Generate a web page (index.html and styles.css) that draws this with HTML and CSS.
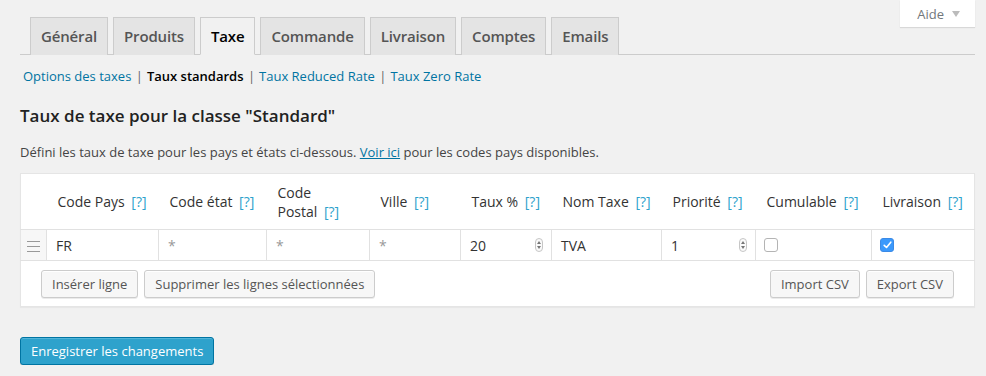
FILE: index.html
```html
<!DOCTYPE html>
<html lang="fr">

<head>
    <meta charset="UTF-8">
    <title>Taxe</title>
    <link rel="stylesheet" href="styles.css">
</head>

<body>
    <div class="wrap">
        <div class="help-bar">
            <a href="#" class="help-link">Aide <span class="arrow"></span></a>
        </div>

        <nav class="nav-tabs">
            <a href="#" class="nav-tab">Général</a>
            <a href="#" class="nav-tab">Produits</a>
            <a href="#" class="nav-tab active">Taxe</a>
            <a href="#" class="nav-tab">Commande</a>
            <a href="#" class="nav-tab">Livraison</a>
            <a href="#" class="nav-tab">Comptes</a>
            <a href="#" class="nav-tab">Emails</a>
        </nav>

        <ul class="subsub">
            <li><a href="#">Options des taxes</a> |</li>
            <li><a href="#" class="current">Taux standards</a> |</li>
            <li><a href="#">Taux Reduced Rate</a> |</li>
            <li><a href="#">Taux Zero Rate</a></li>
        </ul>

        <h3 class="section-title">Taux de taxe pour la classe "Standard"</h3>
        <p class="intro">Défini les taux de taxe pour les pays et états ci-dessous. <a href="#">Voir ici</a> pour les codes pays disponibles.</p>

        <table class="rates">
            <colgroup>
                <col class="c-sort">
                <col class="c-112">
                <col class="c-108">
                <col class="c-103">
                <col class="c-91">
                <col class="c-91">
                <col class="c-110">
                <col class="c-94">
                <col class="c-116">
                <col>
            </colgroup>
            <thead>
                <tr>
                    <th></th>
                    <th>Code Pays <span class="tip">[?]</span></th>
                    <th>Code état <span class="tip">[?]</span></th>
                    <th>Code<br>Postal <span class="tip">[?]</span></th>
                    <th>Ville <span class="tip">[?]</span></th>
                    <th>Taux % <span class="tip">[?]</span></th>
                    <th>Nom Taxe <span class="tip">[?]</span></th>
                    <th>Priorité <span class="tip">[?]</span></th>
                    <th>Cumulable <span class="tip">[?]</span></th>
                    <th>Livraison <span class="tip">[?]</span></th>
                </tr>
            </thead>
            <tbody>
                <tr>
                    <td class="sort"><span class="handle"></span></td>
                    <td><div class="field">FR</div></td>
                    <td><div class="field empty">*</div></td>
                    <td><div class="field empty">*</div></td>
                    <td><div class="field empty">*</div></td>
                    <td><div class="field number">20 <span class="spin"></span></div></td>
                    <td><div class="field">TVA</div></td>
                    <td><div class="field number">1 <span class="spin"></span></div></td>
                    <td><div class="field check-cell"><span class="check"></span></div></td>
                    <td><div class="field check-cell"><span class="check on">
                        <svg width="9" height="8" viewBox="0 0 9 8"><path d="M1.2 4.3 L3.5 6.5 L7.8 1.2" fill="none" stroke="#fff" stroke-width="1.6" stroke-linecap="round" stroke-linejoin="round"/></svg>
                    </span></div></td>
                </tr>
            </tbody>
            <tfoot>
                <tr>
                    <th colspan="10">
                        <div class="actions">
                            <a href="#" class="button">Insérer ligne</a>
                            <a href="#" class="button">Supprimer les lignes sélectionnées</a>
                            <span class="spacer"></span>
                            <a href="#" class="button">Import CSV</a>
                            <a href="#" class="button">Export CSV</a>
                        </div>
                    </th>
                </tr>
            </tfoot>
        </table>

        <p class="submit"><a href="#" class="button-primary">Enregistrer les changements</a></p>
    </div>
</body>

</html>
```

FILE: styles.css
```css
html,
body {
    margin: 0;
    padding: 0;
}

body {
    background: #f1f1f1;
    font-family: 'Open Sans', sans-serif;
    font-size: 13px;
    color: #444;
}

a {
    text-decoration: none;
}

.wrap {
    position: relative;
    margin: 0 11px 0 20px;
}

/*-----aide-----*/
.help-bar {
    position: absolute;
    top: 0;
    right: 0;
}

.help-link {
    display: flex;
    align-items: center;
    gap: 8px;
    height: 27px;
    padding: 0 15px 0 17px;
    background: #fff;
    color: #72777c;
    box-shadow: 0 1px 1px rgba(0, 0, 0, .1);
}

.help-link .arrow {
    width: 0;
    height: 0;
    border-left: 4px solid transparent;
    border-right: 4px solid transparent;
    border-top: 6px solid #bbb;
}

/*-----onglets-----*/
.nav-tabs {
    display: flex;
    gap: 5px;
    padding: 17px 0 0 10px;
    border-bottom: 1px solid #ccc;
}

.nav-tab {
    display: block;
    padding: 6px 10px;
    margin-bottom: -1px;
    line-height: 24px;
    font-size: 15px;
    font-weight: 600;
    letter-spacing: -0.15px;
    color: #555;
    background: #e4e4e4;
    border: 1px solid #ccc;
    border-bottom: none;
}

.nav-tab.active {
    color: #000;
    background: #f1f1f1;
    border-bottom: 1px solid #f1f1f1;
    padding-bottom: 6px;
}

/*-----sous menu-----*/
.subsub {
    display: flex;
    margin: 12px 0 0 3px;
    padding: 0;
    list-style: none;
    color: #666;
    line-height: 18px;
}

.subsub li {
    margin-right: 4px;
}

.subsub a {
    color: #0074a2;
    margin-right: 1px;
}

.subsub a.current {
    color: #000;
    font-weight: 600;
}

.section-title {
    margin: 19px 0 0;
    font-size: 17px;
    font-weight: 600;
    color: #222;
    line-height: 24px;
}

.intro {
    margin: 15px 0 0;
    line-height: 18px;
    color: #444;
}

.intro a {
    color: #0074a2;
    text-decoration: underline;
}

/*-----tableau-----*/
.rates {
    width: 955px;
    margin-top: 12px;
    table-layout: fixed;
    border-collapse: collapse;
    background: #fff;
    border: 1px solid #e5e5e5;
    box-shadow: 0 1px 1px rgba(0, 0, 0, .04);
}

.c-sort { width: 26px; }
.c-112 { width: 112px; }
.c-108 { width: 108px; }
.c-103 { width: 103px; }
.c-91 { width: 91px; }
.c-110 { width: 110px; }
.c-94 { width: 94px; }
.c-116 { width: 116px; }

.rates thead th {
    height: 55px;
    padding: 0 8px 0 11px;
    text-align: left;
    font-weight: 400;
    font-size: 14px;
    line-height: 19px;
    color: #333;
    border-bottom: 1px solid #e1e1e1;
}

.tip {
    margin-left: 3px;
    color: #2ea2cc;
    font-size: 14px;
}

.rates tbody td {
    height: 30px;
    padding: 0;
    border-right: 1px solid #e1e1e1;
    border-bottom: 1px solid #e1e1e1;
}

.rates tbody td:last-child {
    border-right: none;
}

.sort {
    background: #f7f7f7;
    text-align: center;
}

.handle {
    display: inline-block;
    width: 13px;
    height: 9px;
    border-top: 1px solid #999;
    border-bottom: 1px solid #999;
    position: relative;
    vertical-align: middle;
}

.handle::after {
    content: "";
    position: absolute;
    left: 0;
    right: 0;
    top: 4px;
    border-top: 1px solid #999;
}

.field {
    display: flex;
    align-items: center;
    height: 30px;
    padding: 0 9px;
    font-size: 14px;
    color: #333;
}

.field.empty {
    color: #999;
}

.field.number {
    justify-content: space-between;
    padding-right: 8px;
}

.spin {
    width: 6px;
    height: 12px;
    border: 1px solid #c6c6c6;
    border-radius: 4px;
    position: relative;
    background: #fafafa;
}

.spin::before,
.spin::after {
    content: "";
    position: absolute;
    left: 1px;
    border-left: 2px solid transparent;
    border-right: 2px solid transparent;
}

.spin::before {
    top: 2px;
    border-bottom: 3px solid #777;
}

.spin::after {
    bottom: 2px;
    border-top: 3px solid #777;
}

.check {
    display: flex;
    align-items: center;
    justify-content: center;
    width: 12px;
    height: 12px;
    border: 1px solid #b4b4b4;
    border-radius: 3px;
    background: #fff;
    margin-left: -1px;
}

.check.on {
    background: #3b99fc;
    border-color: #3b8ae6;
}

.rates tfoot th {
    padding: 9px 20px 8px 20px;
}

.actions {
    display: flex;
    gap: 6px;
}

.spacer {
    flex: 1;
}

.button {
    display: block;
    height: 26px;
    line-height: 26px;
    padding: 0 10px;
    font-size: 13px;
    font-weight: 400;
    color: #555;
    background: #f7f7f7;
    border: 1px solid #ccc;
    border-radius: 3px;
    box-shadow: inset 0 1px 0 #fff, 0 1px 0 rgba(0, 0, 0, .08);
}

.submit {
    margin: 30px 0 0;
}

.button-primary {
    display: inline-block;
    height: 26px;
    line-height: 26px;
    padding: 0 10px;
    font-size: 13px;
    color: #fff;
    background: #2ea2cc;
    border: 1px solid #0074a2;
    border-radius: 3px;
    box-shadow: inset 0 1px 0 rgba(120, 200, 230, .5), 0 1px 0 rgba(0, 0, 0, .15);
}
```
